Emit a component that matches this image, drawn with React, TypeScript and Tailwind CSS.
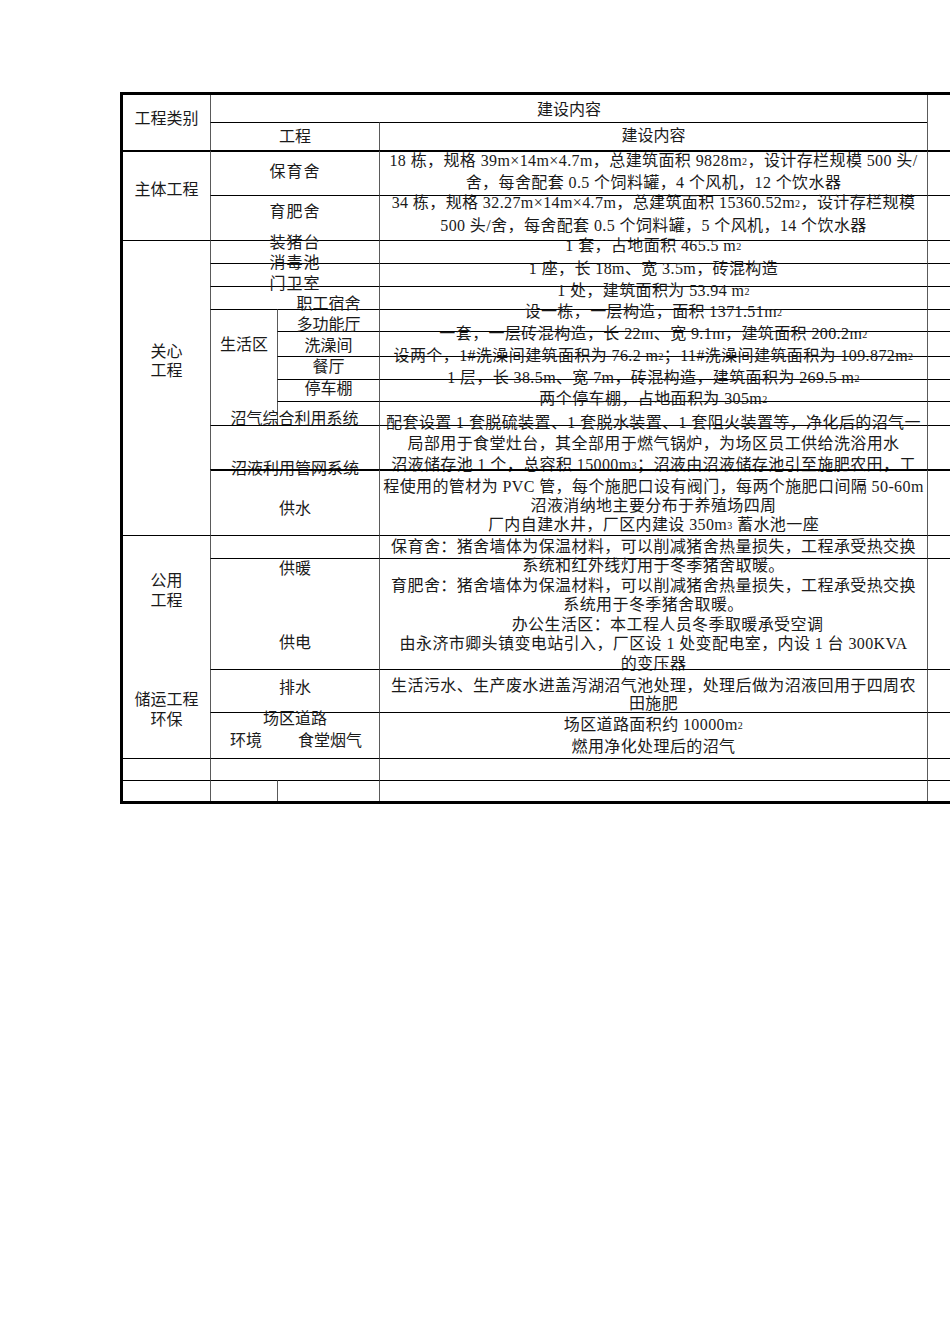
import React from "react";

const V = "border-l border-l-[#5a5a5a]";
const H = "border-t border-t-black";
const H2 = "border-t-2 border-t-black";
const T = "tracking-[0.4px]";

function Cell({ className, children }: { className: string; children?: React.ReactNode }) {
  return <div className={"flex flex-col items-center whitespace-nowrap " + className}>{children}</div>;
}

const Sq = ({ c }: { c: string }) => <span className="text-[10px] relative top-[-1px]">{c}</span>;

export default function App() {
  return (
    <div className="w-[950px] min-h-[1344px] bg-white overflow-hidden pt-[92px] pl-[120px] text-[#1a1a1a] text-[16px] leading-[20px] font-['Liberation_Serif','Noto_Sans_CJK_SC',serif]">
      <div className="grid w-[830px] border-t-[3px] border-l-[3px] border-b-[3px] border-black grid-cols-[87px_67px_102px_548px_23px] grid-rows-[27px_28px_45px_45px_23px_23px_23px_22px_25px_23px_22px_24px_44px_66px_23px_111px_43px_46px_22px_21px]">
        {/* header */}
        <Cell className="col-start-1 row-start-1 row-span-2">
          <div className="mt-[14px]">工程类别</div>
        </Cell>
        <Cell className={"col-start-2 col-span-3 row-start-1 " + V}>
          <div className="mt-[5px]">建设内容</div>
        </Cell>
        <Cell className={"col-start-5 row-start-1 row-span-2 " + V} />
        <Cell className={"col-start-2 col-span-2 row-start-2 " + V + " " + H}>
          <div className="mt-[4px]">工程</div>
        </Cell>
        <Cell className={"col-start-4 row-start-2 " + V + " " + H}>
          <div className="mt-[3px]">建设内容</div>
        </Cell>

        {/* 主体工程 */}
        <Cell className={"col-start-1 row-start-3 row-span-2 " + H2}>
          <div className="mt-[28px]">主体工程</div>
        </Cell>
        <Cell className={"col-start-2 col-span-2 row-start-3 " + V + " " + H2}>
          <div className="mt-[10px] tracking-[1px]">保育舍</div>
        </Cell>
        <Cell className={"col-start-4 row-start-3 " + T + " " + V + " " + H2}>
          <div className="mt-[-1px]">18 栋，规格 39m×14m×4.7m，总建筑面积 9828m<Sq c="2" />，设计存栏规模 500 头/</div>
          <div>舍，每舍配套 0.5 个饲料罐，4 个风机，12 个饮水器</div>
        </Cell>
        <Cell className={"col-start-5 row-start-3 " + V + " " + H2} />
        <Cell className={"col-start-2 col-span-2 row-start-4 " + V + " " + H}>
          <div className="mt-[6px] tracking-[1px]">育肥舍</div>
        </Cell>
        <Cell className={"col-start-4 row-start-4 leading-[21px] " + T + " " + V + " " + H}>
          <div className="mt-[-4px]">34 栋，规格 32.27m×14m×4.7m，总建筑面积 15360.52m<Sq c="2" />，设计存栏规模</div>
          <div>500 头/舍，每舍配套 0.5 个饲料罐，5 个风机，14 个饮水器</div>
        </Cell>
        <Cell className={"col-start-5 row-start-4 " + V + " " + H} />

        {/* 关心工程 */}
        <Cell className={"col-start-1 row-start-5 row-span-10 leading-[19px] " + H}>
          <div className="mt-[101px]">关心</div>
          <div>工程</div>
        </Cell>
        <Cell className={"col-start-2 col-span-2 row-start-5 " + V + " " + H}>
          <div className="mt-[-8px] tracking-[1px]">装猪台</div>
        </Cell>
        <Cell className={"col-start-4 row-start-5 " + T + " " + V + " " + H}>
          <div className="mt-[-5px]">1 套，占地面积 465.5 m<Sq c="2" /></div>
        </Cell>
        <Cell className={"col-start-5 row-start-5 " + V + " " + H} />
        <Cell className={"col-start-2 col-span-2 row-start-6 " + V + " " + H}>
          <div className="mt-[-11px] tracking-[1px]">消毒池</div>
        </Cell>
        <Cell className={"col-start-4 row-start-6 " + T + " " + V + " " + H}>
          <div className="mt-[-5px]">1 座，长 18m、宽 3.5m，砖混构造</div>
        </Cell>
        <Cell className={"col-start-5 row-start-6 " + V + " " + H} />
        <Cell className={"col-start-2 col-span-2 row-start-7 " + V + " " + H}>
          <div className="mt-[-13px] tracking-[1px]">门卫室</div>
        </Cell>
        <Cell className={"col-start-4 row-start-7 " + T + " " + V + " " + H}>
          <div className="mt-[-6px]">1 处，建筑面积为 53.94 m<Sq c="2" /></div>
        </Cell>
        <Cell className={"col-start-5 row-start-7 " + V + " " + H} />

        {/* 生活区 */}
        <Cell className={"col-start-2 row-start-8 row-span-5 " + V + " " + H}>
          <div className="mt-[25px]">生活区</div>
        </Cell>
        <Cell className={"col-start-3 row-start-8 " + V + " " + H}>
          <div className="mt-[-16px]">职工宿舍</div>
        </Cell>
        <Cell className={"col-start-4 row-start-8 " + T + " " + V + " " + H}>
          <div className="mt-[-8px]">设一栋，一层构造，面积 1371.51m<Sq c="2" /></div>
        </Cell>
        <Cell className={"col-start-5 row-start-8 " + V + " " + H} />
        <Cell className={"col-start-3 row-start-9 " + V + " " + H}>
          <div className="mt-[-17px]">多功能厅</div>
        </Cell>
        <Cell className={"col-start-4 row-start-9 " + T + " " + V + " " + H}>
          <div className="mt-[-8px]">一套，一层砖混构造，长 22m、宽 9.1m，建筑面积 200.2m<Sq c="2" /></div>
        </Cell>
        <Cell className={"col-start-5 row-start-9 " + V + " " + H} />
        <Cell className={"col-start-3 row-start-10 " + V + " " + H}>
          <div className="mt-[-21px]">洗澡间</div>
        </Cell>
        <Cell className={"col-start-4 row-start-10 " + T + " " + V + " " + H}>
          <div className="mt-[-11px]">设两个，1#洗澡间建筑面积为 76.2 m<Sq c="2" />；11#洗澡间建筑面积为 109.872m<Sq c="2" /></div>
        </Cell>
        <Cell className={"col-start-5 row-start-10 " + V + " " + H} />
        <Cell className={"col-start-3 row-start-11 " + V + " " + H}>
          <div className="mt-[-23px]">餐厅</div>
        </Cell>
        <Cell className={"col-start-4 row-start-11 " + T + " " + V + " " + H}>
          <div className="mt-[-12px]">1 层，长 38.5m、宽 7m，砖混构造，建筑面积为 269.5 m<Sq c="2" /></div>
        </Cell>
        <Cell className={"col-start-5 row-start-11 " + V + " " + H} />
        <Cell className={"col-start-3 row-start-12 " + V + " " + H}>
          <div className="mt-[-23px]">停车棚</div>
          <div className="mt-[10px] ml-[-68px]">沼气综合利用系统</div>
        </Cell>
        <Cell className={"col-start-4 row-start-12 " + T + " " + V + " " + H}>
          <div className="mt-[-13px]">两个停车棚，占地面积为 305m<Sq c="2" /></div>
        </Cell>
        <Cell className={"col-start-5 row-start-12 " + V + " " + H} />

        {/* 沼液 */}
        <Cell className={"col-start-2 col-span-2 row-start-13 " + V + " " + H}>
          <div className="mt-[33px]">沼液利用管网系统</div>
        </Cell>
        <Cell className={"col-start-4 row-start-13 leading-[21px] " + T + " " + V + " " + H}>
          <div className="mt-[-14px]">配套设置 1 套脱硫装置、1 套脱水装置、1 套阻火装置等，净化后的沼气一</div>
          <div>局部用于食堂灶台，其全部用于燃气锅炉，为场区员工供给洗浴用水</div>
          <div>沼液储存池 1 个，总容积 15000m<Sq c="3" />；沼液由沼液储存池引至施肥农田，工</div>
        </Cell>
        <Cell className={"col-start-5 row-start-13 " + V + " " + H} />
        <Cell className={"col-start-2 col-span-2 row-start-14 " + V + " " + H2}>
          <div className="mt-[28px]">供水</div>
        </Cell>
        <Cell className={"col-start-4 row-start-14 leading-[19px] " + T + " " + V + " " + H2}>
          <div className="mt-[6px]">程使用的管材为 PVC 管，每个施肥口设有阀门，每两个施肥口间隔 50-60m</div>
          <div>沼液消纳地主要分布于养殖场四周</div>
          <div>厂内自建水井，厂区内建设 350m<Sq c="3" /> 蓄水池一座</div>
        </Cell>
        <Cell className={"col-start-5 row-start-14 " + V + " " + H2} />

        {/* 公用工程 */}
        <Cell className={"col-start-1 row-start-15 row-span-4 " + H}>
          <div className="mt-[35px]">公用</div>
          <div>工程</div>
          <div className="mt-[79px]">储运工程</div>
          <div>环保</div>
        </Cell>
        <Cell className={"col-start-2 col-span-2 row-start-15 " + V + " " + H} />
        <Cell className={"col-start-4 row-start-15 " + T + " " + V + " " + H}>
          <div className="mt-[1px]">保育舍：猪舍墙体为保温材料，可以削减猪舍热量损失，工程承受热交换</div>
        </Cell>
        <Cell className={"col-start-5 row-start-15 " + V + " " + H} />
        <Cell className={"col-start-2 col-span-2 row-start-16 " + V + " " + H}>
          <div className="mt-[0px]">供暖</div>
          <div className="mt-[54px]">供电</div>
        </Cell>
        <Cell className={"col-start-4 row-start-16 leading-[19.6px] " + T + " " + V + " " + H}>
          <div className="mt-[-3px]">系统和红外线灯用于冬季猪舍取暖。</div>
          <div>育肥舍：猪舍墙体为保温材料，可以削减猪舍热量损失，工程承受热交换</div>
          <div>系统用于冬季猪舍取暖。</div>
          <div className="ml-[28px]">办公生活区：本工程人员冬季取暖承受空调</div>
          <div>由永济市卿头镇变电站引入，厂区设 1 处变配电室，内设 1 台 300KVA</div>
          <div>的变压器</div>
        </Cell>
        <Cell className={"col-start-5 row-start-16 " + V + " " + H} />
        <Cell className={"col-start-2 col-span-2 row-start-17 " + V + " " + H}>
          <div className="mt-[8px]">排水</div>
        </Cell>
        <Cell className={"col-start-4 row-start-17 leading-[18px] " + T + " " + V + " " + H}>
          <div className="mt-[7px]">生活污水、生产废水进盖泻湖沼气池处理，处理后做为沼液回用于四周农</div>
          <div>田施肥</div>
        </Cell>
        <Cell className={"col-start-5 row-start-17 " + V + " " + H} />
        <Cell className={"col-start-2 col-span-2 row-start-18 leading-[22px] " + V + " " + H}>
          <div className="mt-[-5px]">场区道路</div>
          <div className="self-start flex pl-[19px] gap-[36px]">
            <span>环境</span>
            <span>食堂烟气</span>
          </div>
        </Cell>
        <Cell className={"col-start-4 row-start-18 " + T + " " + V + " " + H}>
          <div className="mt-[2px]">场区道路面积约 10000m<Sq c="2" /></div>
          <div>燃用净化处理后的沼气</div>
        </Cell>
        <Cell className={"col-start-5 row-start-18 " + V + " " + H} />

        {/* empty rows */}
        <Cell className={"col-start-1 row-start-19 " + H} />
        <Cell className={"col-start-2 col-span-2 row-start-19 " + V + " " + H} />
        <Cell className={"col-start-4 row-start-19 " + V + " " + H} />
        <Cell className={"col-start-5 row-start-19 " + V + " " + H} />
        <Cell className={"col-start-1 row-start-20 " + H} />
        <Cell className={"col-start-2 row-start-20 " + V + " " + H} />
        <Cell className={"col-start-3 row-start-20 " + V + " " + H} />
        <Cell className={"col-start-4 row-start-20 " + V + " " + H} />
        <Cell className={"col-start-5 row-start-20 " + V + " " + H} />
      </div>
    </div>
  );
}
